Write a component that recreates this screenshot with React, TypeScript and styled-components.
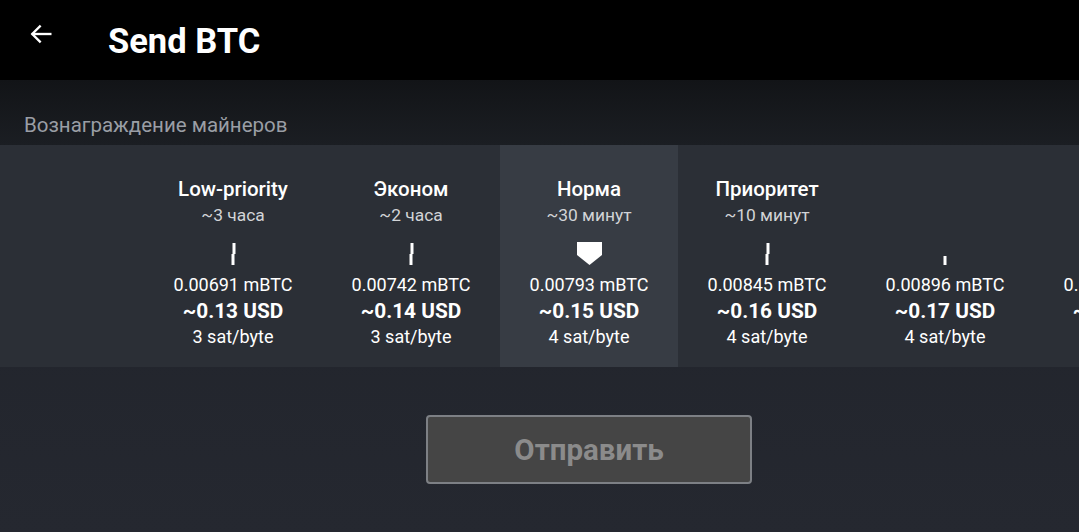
import styled, { createGlobalStyle } from 'styled-components';

const GlobalStyle = createGlobalStyle`
  html, body {
    margin: 0;
    padding: 0;
    background: #000;
  }
  body {
    font-family: Roboto, "Noto Sans", "Liberation Sans", sans-serif;
    color: #fff;
  }
`;

const Screen = styled.div`
  width: 1079px;
  height: 532px;
  display: flex;
  flex-direction: column;
  overflow: hidden;
  background: linear-gradient(180deg, #1e2128 0%, #252830 100%);
`;

const TopBar = styled.header`
  height: 80px;
  flex-shrink: 0;
  background: #000;
  display: flex;
  align-items: center;
  padding-left: 26px;
  column-gap: 52px;
`;

const BackButton = styled.button`
  width: 30px;
  height: 30px;
  margin-top: -12px;
  padding: 0;
  border: none;
  background: none;
  color: #fff;
  display: flex;
  align-items: center;
  justify-content: center;
`;

const Title = styled.h1`
  margin: 2px 0 0;
  font-size: 34.5px;
  font-weight: 700;
`;

const SectionHead = styled.div`
  height: 65px;
  flex-shrink: 0;
  background: linear-gradient(180deg, #121417 0%, #1b1e23 100%);
  display: flex;
  align-items: flex-end;
  padding: 0 0 6px 24px;
  box-sizing: border-box;
`;

const SectionLabel = styled.span`
  font-size: 20.5px;
  line-height: 28px;
  color: #9a9ea5;
`;

const FeeStrip = styled.div`
  height: 222px;
  flex-shrink: 0;
  background: #2b2f36;
  display: flex;
  padding-left: 144px;
  overflow: hidden;
`;

const FeeColumn = styled.div<{ $active?: boolean }>`
  width: 178px;
  flex-shrink: 0;
  box-sizing: border-box;
  padding-top: 31px;
  display: flex;
  flex-direction: column;
  align-items: center;
  background: ${(p) => (p.$active ? '#373c44' : 'transparent')};
  white-space: nowrap;
`;

const Line = styled.div<{ $size: number; $weight?: number; $color?: string }>`
  height: 26px;
  line-height: 26px;
  font-size: ${(p) => p.$size}px;
  font-weight: ${(p) => p.$weight ?? 400};
  color: ${(p) => p.$color ?? '#fff'};
`;

const MarkSlot = styled.div`
  height: 44px;
  display: flex;
  align-items: flex-end;
  justify-content: center;
  padding-bottom: 7px;
  box-sizing: border-box;
`;

const SendArea = styled.div`
  flex: 1;
  display: flex;
  padding: 48px 0 0 426px;
`;

const SendButton = styled.button`
  width: 326px;
  height: 69px;
  box-sizing: border-box;
  border: 2px solid #7d8085;
  border-radius: 4px;
  background: #454545;
  color: #8b8b8b;
  font-family: Roboto, "Noto Sans", "Liberation Sans", sans-serif;
  font-size: 29.5px;
  font-weight: 700;
`;

type Mark = 'tall' | 'short' | 'selected';

type Fee = {
  name: string;
  eta: string;
  btc: string;
  usd: string;
  rate: string;
  mark: Mark;
  active?: boolean;
};

const fees: Fee[] = [
  { name: 'Low-priority', eta: '~3 часа', btc: '0.00691 mBTC', usd: '~0.13 USD', rate: '3 sat/byte', mark: 'tall' },
  { name: 'Эконом', eta: '~2 часа', btc: '0.00742 mBTC', usd: '~0.14 USD', rate: '3 sat/byte', mark: 'tall' },
  { name: 'Норма', eta: '~30 минут', btc: '0.00793 mBTC', usd: '~0.15 USD', rate: '4 sat/byte', mark: 'selected', active: true },
  { name: 'Приоритет', eta: '~10 минут', btc: '0.00845 mBTC', usd: '~0.16 USD', rate: '4 sat/byte', mark: 'tall' },
  { name: '', eta: '', btc: '0.00896 mBTC', usd: '~0.17 USD', rate: '4 sat/byte', mark: 'short' },
  { name: '', eta: '', btc: '0.00947 mBTC', usd: '~0.18 USD', rate: '5 sat/byte', mark: 'short' },
];

const FeeMark = ({ kind }: { kind: Mark }) => {
  if (kind === 'selected') {
    return (
      <svg width="25" height="23" viewBox="0 0 25 23">
        <polygon points="0,0 25,0 25,13 12.5,23 0,13" fill="#fff" />
      </svg>
    );
  }
  if (kind === 'short') {
    return (
      <svg width="4" height="9" viewBox="0 0 4 9">
        <rect x="0.5" y="0" width="3" height="9" fill="#fff" />
      </svg>
    );
  }
  return (
    <svg width="5" height="22" viewBox="0 0 5 22">
      <rect x="1.5" y="0" width="3" height="11" fill="#fff" />
      <rect x="0.5" y="11" width="3" height="11" fill="#fff" />
    </svg>
  );
};

export default function App() {
  return (
    <>
      <GlobalStyle />
      <Screen>
        <TopBar>
          <BackButton aria-label="Back">
            <svg width="28" height="28" viewBox="0 0 24 24" fill="none" stroke="#fff" strokeWidth="2" strokeLinecap="square">
              <path d="M20 12H5" />
              <path d="M11 5.5L4.5 12l6.5 6.5" />
            </svg>
          </BackButton>
          <Title>Send BTC</Title>
        </TopBar>
        <SectionHead>
          <SectionLabel>Вознаграждение майнеров</SectionLabel>
        </SectionHead>
        <FeeStrip>
          {fees.map((f) => (
            <FeeColumn key={f.btc} $active={f.active}>
              <Line $size={20.5} $weight={500}>{f.name || '\u00a0'}</Line>
              <Line $size={17.4} $color="#d2d4d7">{f.eta || '\u00a0'}</Line>
              <MarkSlot>
                <FeeMark kind={f.mark} />
              </MarkSlot>
              <Line $size={18}>{f.btc}</Line>
              <Line $size={20.8} $weight={700}>{f.usd}</Line>
              <Line $size={18}>{f.rate}</Line>
            </FeeColumn>
          ))}
        </FeeStrip>
        <SendArea>
          <SendButton disabled>Отправить</SendButton>
        </SendArea>
      </Screen>
    </>
  );
}
